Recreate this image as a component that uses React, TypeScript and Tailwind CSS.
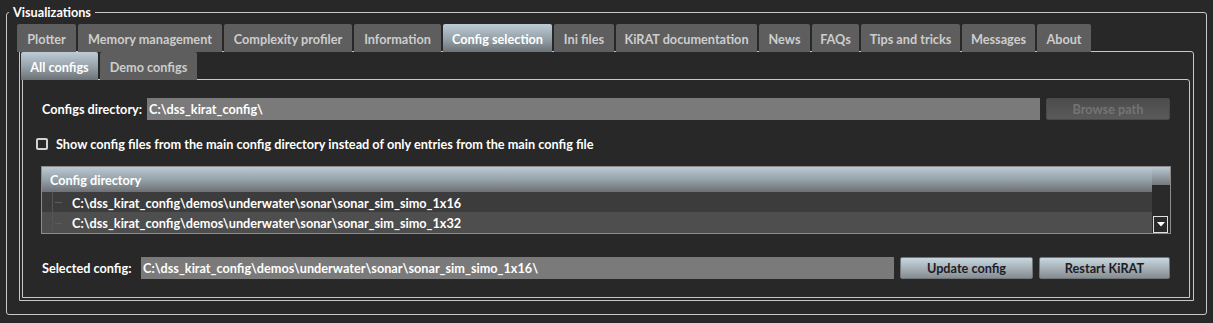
const mainTabs = [
  { label: "Plotter", w: "w-[59px]" },
  { label: "Memory management", w: "w-[144px]" },
  { label: "Complexity profiler", w: "w-[128px]" },
  { label: "Information", w: "w-[87px]" },
  { label: "Config selection", w: "w-[109px]", active: true },
  { label: "Ini files", w: "w-[60px]" },
  { label: "KiRAT documentation", w: "w-[141px]" },
  { label: "News", w: "w-[51px]" },
  { label: "FAQs", w: "w-[47px]" },
  { label: "Tips and tricks", w: "w-[99px]" },
  { label: "Messages", w: "w-[73px]" },
  { label: "About", w: "w-[54px]" },
];

const subTabs = [
  { label: "All configs", w: "w-[77px]", active: true },
  { label: "Demo configs", w: "w-[97px]" },
];

const rows = [
  { path: "C:\\dss_kirat_config\\demos\\underwater\\sonar\\sonar_sim_simo_1x16", bg: "bg-[#3c3c3c]", h: "h-[20px]" },
  { path: "C:\\dss_kirat_config\\demos\\underwater\\sonar\\sonar_sim_simo_1x32", bg: "bg-[#4e4e4e]", h: "h-[21px]" },
];

function Tab({ label, w, active }: { label: string; w: string; active?: boolean }) {
  return (
    <div
      className={`relative flex h-[28px] shrink-0 items-center justify-center rounded-t-[2px] pt-[3px] text-[12.7px] font-bold ${w} ${
        active
          ? "bg-gradient-to-b from-[#bccbd5] via-[#98a4ac] to-[#6c7276] text-white"
          : "bg-[#5e5e5e] text-[#cdcdcd]"
      }`}
    >
      {label}
    </div>
  );
}

function Field({ value, w }: { value: string; w: string }) {
  return (
    <div className={`flex h-[22px] items-center bg-[#7a7a7a] pl-[2px] pt-[2px] text-[12.7px] font-bold text-white ${w}`}>
      {value}
    </div>
  );
}

function BlueButton({ label, w }: { label: string; w: string }) {
  return (
    <button
      className={`flex h-[22px] items-center justify-center rounded-[2px] border border-[#6f767b] bg-gradient-to-b from-[#c8d7e0] to-[#878d91] pt-[2px] text-[12.7px] font-bold text-[#1c1c28] ${w}`}
    >
      {label}
    </button>
  );
}

export default function App() {
  return (
    <div
      className="h-[323px] w-[1213px] bg-[#282828] px-[6px] pt-[4px] text-white"
      style={{ fontFamily: "Lato, 'Open Sans', sans-serif" }}
    >
      <fieldset className="rounded-[3px] border border-[#c8c8c8] p-0">
        <legend className="ml-[2px] px-[4px] text-[12.7px] font-bold leading-[16px] text-white">
          Visualizations
        </legend>
        <div className="pb-[13px] pl-[10px] pr-[12px] pt-[4px]">
          <div className="flex gap-[2px]">
            {mainTabs.map((t) => (
              <Tab key={t.label} {...t} />
            ))}
          </div>

          <div className="-mt-px ml-[2px] rounded-tr-[3px] border border-[#c8c8c8] pb-[2px] pl-[1px] pr-[3px]">
            <div className="flex gap-[2px]">
              {subTabs.map((t) => (
                <Tab key={t.label} {...t} />
              ))}
            </div>

            <div className="-mt-px ml-[1px] flex flex-col rounded-tr-[3px] border border-[#c8c8c8] px-[18px] pb-[18px] pt-[18px]">
              <div className="flex items-center pl-[1px] pr-[1px]">
                <span className="w-[105px] shrink-0 pt-[2px] text-[12.7px] font-bold">Configs directory:</span>
                <Field value="C:\dss_kirat_config\" w="flex-1" />
                <button className="ml-[6px] flex h-[22px] w-[124px] items-center justify-center rounded-[2px] border border-[#4a4a4a] bg-gradient-to-b from-[#4c4c4c] to-[#5a5a5a] pt-[2px] text-[12.7px] font-bold text-[#747474]">
                  Browse path
                </button>
              </div>

              <label className="mt-[18px] flex h-[12px] items-center gap-[8px] text-[12.7px] font-bold">
                <span className="-ml-[5px] h-[12px] w-[12px] shrink-0 rounded-[2px] border-2 border-[#d2d2d2]" />
                <span className="pt-[2px]">
                  Show config files from the main config directory instead of only entries from the main config file
                </span>
              </label>

              <div className="mt-[16px] flex h-[68px] border border-[#8c8c8c]">
                <div className="flex flex-1 flex-col">
                  <div className="flex h-[25px] items-center bg-gradient-to-b from-[#bac9d3] via-[#97a2a9] to-[#6d7175] pl-[8px] pt-[2px] text-[12.7px] font-bold text-white">
                    Config directory
                  </div>
                  {rows.map((r) => (
                    <div key={r.path} className={`flex items-center text-[12.7px] font-bold ${r.bg} ${r.h}`}>
                      <div className="relative h-full w-[30px] shrink-0">
                        <div className="absolute left-[10px] top-0 h-full w-px bg-[#555555]" />
                        <div className="absolute left-[13px] top-1/2 h-px w-[7px] bg-[#5c5c5c]" />
                      </div>
                      <span className="pt-[3px]">{r.path}</span>
                    </div>
                  ))}
                </div>
                <div className="flex w-[18px] flex-col bg-[#2a2a2a]">
                  <div className="h-[18px] bg-gradient-to-b from-[#bac9d3] to-[#75797d]" />
                  <div className="flex-1" />
                  <div className="flex h-[17px] items-center justify-center pl-px pr-[2px]">
                    <div className="flex h-[17px] w-[16px] items-center justify-center border border-[#e0e0e0] bg-[#2a2a2a]">
                      <svg width="8" height="5" viewBox="0 0 8 5">
                        <path d="M0 0h8L4 4.5z" fill="#ffffff" />
                      </svg>
                    </div>
                  </div>
                </div>
              </div>

              <div className="mt-[23px] flex items-center pl-[1px] pr-[1px]">
                <span className="w-[99px] shrink-0 pt-[2px] text-[12.7px] font-bold">Selected config:</span>
                <Field value="C:\dss_kirat_config\demos\underwater\sonar\sonar_sim_simo_1x16\" w="flex-1" />
                <BlueButton label="Update config" w="ml-[6px] w-[133px]" />
                <BlueButton label="Restart KiRAT" w="ml-[6px] w-[131px]" />
              </div>
            </div>
          </div>
        </div>
      </fieldset>
    </div>
  );
}
